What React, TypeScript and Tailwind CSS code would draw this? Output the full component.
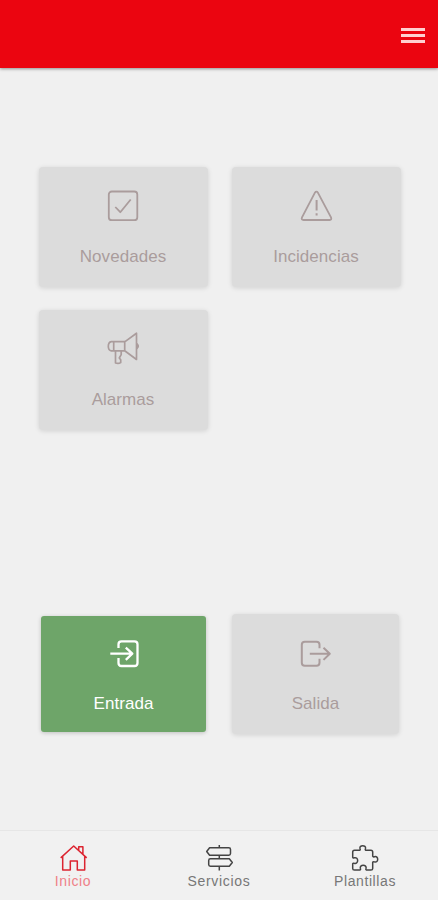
import type { ReactNode } from 'react';

function TileIcon({ children, width = 1.8 }: { children: ReactNode; width?: number }) {
  return (
    <svg className="size-9 shrink-0" viewBox="0 0 36 36" fill="none" stroke="currentColor" strokeWidth={width} strokeLinejoin="round">
      {children}
    </svg>
  );
}

function Tile({ label, icon, className, labelClass }: { label: string; icon: ReactNode; className: string; labelClass: string }) {
  return (
    <button className={`flex flex-col items-center pt-[21px] ${className}`}>
      {icon}
      <span className={`whitespace-nowrap text-[17px] leading-5 tracking-[0.05px] ${labelClass}`}>{label}</span>
    </button>
  );
}

function NavItem({ label, className, labelClass, children }: { label: string; className: string; labelClass: string; children: ReactNode }) {
  return (
    <a className={`flex w-[146px] flex-col items-center pt-3 ${className}`}>
      <svg className="size-[30px] shrink-0" viewBox="0 0 30 30" fill="none" stroke="currentColor" strokeWidth="1.5" strokeLinejoin="round">
        {children}
      </svg>
      <span className={`whitespace-nowrap text-[14px] leading-4 ${labelClass}`}>{label}</span>
    </a>
  );
}

const grayTile = 'h-[120px] w-[169px] rounded bg-[#dcdcdc] text-[#aa9c9c] shadow-[0_1px_5px_rgba(0,0,0,0.13)]';

export default function App() {
  return (
    <div className="flex h-[900px] w-[438px] flex-col overflow-hidden bg-[#f0f0f0] font-['Liberation_Sans',Arial,sans-serif]">
      <header className="flex h-[68px] shrink-0 items-start justify-end bg-[#eb0510] pr-[13px] pt-7 shadow-[0_1px_3px_rgba(0,0,0,0.4)]">
        <button aria-label="Menu" className="flex w-6 flex-col gap-[3px]">
          <span className="h-[3px] bg-[#ffd0d0]" />
          <span className="h-[3px] bg-[#ffd0d0]" />
          <span className="h-[3px] bg-[#ffd0d0]" />
        </button>
      </header>

      <main className="flex flex-1 flex-col pl-[38.5px] pt-[99px]">
        <div className="grid grid-cols-[169px_169px] gap-x-6 gap-y-[23px]">
          <Tile
            label="Novedades"
            className={grayTile}
            labelClass="mt-[23px]"
            icon={
              <TileIcon>
                <rect x="3.8" y="3.5" width="28.5" height="28.7" rx="3" />
                <path d="M10.3 19l5 5.2L25.7 11.5" />
              </TileIcon>
            }
          />
          <Tile
            label="Incidencias"
            className={grayTile}
            labelClass="mt-[23px]"
            icon={
              <TileIcon>
                <path d="M16.8 4.8q1.6-2.2 3.2 0L33 29.3q1 2.5-1.4 2.7H5.6q-2.7-.2-1.6-2.7z" />
                <path d="M18.6 12v10.5M18.6 25.3v2.2" strokeWidth="2" />
              </TileIcon>
            }
          />
          <Tile
            label="Alarmas"
            className={grayTile}
            labelClass="mt-[23px]"
            icon={
              <TileIcon width={1.7}>
                <path d="M19.7 10.6H6.3q-3 .6-3 4.7t3 4.6h13.4zM8.7 10.6v9.3M19.7 10.9L31.5 2.2v26.3L19.7 19.8" />
                <path d="M32 12.8q2.5 2.3 0 4.6z" fill="currentColor" />
                <path d="M10.5 20v12q3 1 5.2-.4v-2.8l-1.4-1.8 1.9-3.4V20" />
              </TileIcon>
            }
          />
        </div>

        <div className="mt-[184px] flex items-start">
          <Tile
            label="Entrada"
            className="ml-[2.5px] mt-0.5 h-[116px] w-[165px] rounded-[3px] bg-[#6ea569] text-white shadow-[0_1px_4px_rgba(0,0,0,0.2)]"
            labelClass="mt-[21px]"
            icon={
              <TileIcon width={2.3}>
                <path d="M12.5 11V7.3q0-3 3-3h13q3 0 3 3V26q0 3-3 3h-13q-3 0-3-3v-5M4.3 16.7h22M19.8 10.7l6.5 6-6.5 6.2" />
              </TileIcon>
            }
          />
          <Tile
            label="Salida"
            className="ml-[26px] h-[120px] w-[167px] rounded bg-[#dcdcdc] text-[#aa9c9c] shadow-[0_1px_5px_rgba(0,0,0,0.13)]"
            labelClass="mt-[23px]"
            icon={
              <TileIcon width={2}>
                <path d="M21.5 13.3V9.7q0-3-3-3H6.8q-3 0-3 3v18q0 3 3 3h11.7q3 0 3-3v-4M11.8 18.7h20M25.5 12.7l6.3 6-6.3 6.2" />
              </TileIcon>
            }
          />
        </div>
      </main>

      <nav className="flex h-[70px] shrink-0 border-t border-[#e6e6e6] bg-[#f1f1f1]">
        <NavItem label="Inicio" className="text-[#dc2430]" labelClass="tracking-[0.6px] text-[#ef8088]">
          <path d="M4.7 13.5V27h7.6v-9h7v9h7.4V13.5M2.7 14.9L15.7 3l13 11.9M20.7 7.3V3.7h4.2v7.3" />
        </NavItem>
        <NavItem label="Servicios" className="text-[#444]" labelClass="tracking-[0.7px] text-[#777]">
          <path d="M5.6 4.7h19.2q1.7 0 1.7 1.7v4.2q0 1.7-1.7 1.7H5.6L2.7 8.5zM25.3 15.7H6.4q-1.7 0-1.7 1.7v4.2q0 1.7 1.7 1.7h18.9l3-3.8zM15.3 2v2.7M15.3 12.3v3.4M15.3 23.3V27.5" />
        </NavItem>
        <NavItem label="Plantillas" className="text-[#444]" labelClass="tracking-[0.6px] text-[#777]">
          <path d="M4.5 7.2h5.2q.9-.4.3-1.7C9 1.7 16.4 1.7 15.5 5.5q-.6 1.3.3 1.7h5.1q1.8 0 1.8 1.8v4.2q.4 1 1.7.5c4.4-1.4 4.4 6.6 0 5.2q-1.3-.5-1.7.5v6q0 1.6-1.8 1.6h-4.4q-1-.3-.5-1.5c1.4-4.3-7-4.3-5.6 0q.5 1.2-.5 1.5H4.5q-1.8 0-1.8-1.6v-4.6q.3-1 1.5-.5c4.6 1.4 4.6-6.9 0-5.5q-1.2.5-1.5-.5V9q0-1.8 1.8-1.8z" />
        </NavItem>
      </nav>
    </div>
  );
}
